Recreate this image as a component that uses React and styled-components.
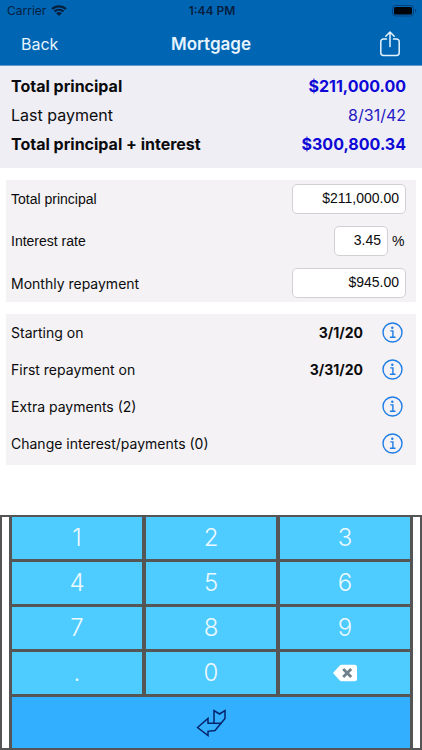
import React, { useState } from "react";
import styled, { createGlobalStyle, css } from "styled-components";

const GlobalStyle = createGlobalStyle`
  * { box-sizing: border-box; }
  body {
    margin: 0;
    background: #ffffff;
    color: #0b0b0d;
    font-family: Inter, "Liberation Sans", sans-serif;
  }
  button { font: inherit; border: 0; padding: 0; cursor: pointer; }
`;

const Screen = styled.div`
  display: flex;
  flex-direction: column;
  min-height: 100vh;
`;

const Header = styled.header`
  background: #0066b4;
  border-bottom: 1px solid #5b9bd0;
`;

const StatusBar = styled.div`
  display: grid;
  grid-template-columns: 1fr auto 1fr;
  align-items: center;
  height: 22px;
  padding: 0 5px 0 7px;
  font-size: 12px;
  line-height: 16px;
  color: #06203f;
`;

const Carrier = styled.span`
  display: flex;
  align-items: center;
  gap: 5px;
`;

const Clock = styled.span`
  font-weight: 600;
`;

const Battery = styled.span`
  display: flex;
  justify-content: flex-end;
`;

const NavBar = styled.nav`
  display: grid;
  grid-template-columns: 1fr auto 1fr;
  align-items: center;
  height: 43px;
  padding: 0 21px;
  color: #ffffff;
`;

const BackButton = styled.button`
  justify-self: start;
  background: none;
  color: #e6f4ff;
  font-size: 16px;
  line-height: 24px;
`;

const Title = styled.h1`
  margin: 0;
  font-size: 17px;
  line-height: 24px;
  font-weight: 600;
  color: #e6f4ff;
`;

const ShareButton = styled.button`
  display: flex;
  justify-self: end;
  background: none;
  color: #e6f4ff;
`;

const Summary = styled.dl`
  margin: 0;
  padding: 6px 16px 9px 11px;
  background: #efeef5;
`;

const SummaryRow = styled.div`
  display: flex;
  justify-content: space-between;
  font-size: 16px;
  line-height: 29px;
  font-weight: ${(p) => (p.$strong ? 700 : 400)};
`;

const SummaryValue = styled.dd`
  margin: 0;
  color: ${(p) => (p.$strong ? "#0d08d6" : "#2418c4")};
`;

const Main = styled.main`
  display: flex;
  flex-direction: column;
  gap: 12px;
  padding: 12px 6px;
`;

const Panel = styled.section`
  background: #f4f2f4;
`;

const Fields = styled(Panel)`
  display: flex;
  flex-direction: column;
  gap: 12px;
  padding: 4px 10px 4px 5px;
`;

const Field = styled.div`
  display: flex;
  align-items: center;
  font-size: 14px;
  height: 30px;
`;

const FieldLabel = styled.label`
  flex: 1;
  ${(p) =>
    p.$plain &&
    css`
      font-family: "Liberation Sans", Arial, sans-serif;
    `}
`;

const AmountInput = styled.input`
  width: ${(p) => (p.$short ? 54 : 114)}px;
  height: 30px;
  padding: 0 6px 2px;
  border: 1px solid #d2d0d4;
  border-radius: 5px;
  background: #ffffff;
  color: #0b0b0d;
  font: 14px "Liberation Sans", Arial, sans-serif;
  text-align: right;
`;

const Unit = styled.span`
  width: 18px;
  padding-left: 4px;
  font-family: "Liberation Sans", Arial, sans-serif;
`;

const Details = styled(Panel)`
  padding: 0 13px 3px 5px;
`;

const DetailRow = styled.div`
  display: flex;
  align-items: center;
  height: 37px;
  font-size: 14px;
`;

const DetailLabel = styled.span`
  flex: 1;
`;

const DetailDate = styled.strong`
  margin-right: 19px;
  font-weight: 700;
`;

const InfoButton = styled.button`
  display: flex;
  background: none;
  color: #1e7ce6;
`;

const Keypad = styled.section`
  margin-top: auto;
  padding: 2px;
  background: #555556;
`;

const KeypadTray = styled.div`
  padding: 0 7px;
  background: #ffffff;
`;

const Keys = styled.div`
  display: grid;
  grid-template-columns: repeat(3, 1fr);
  grid-template-rows: repeat(4, 42px) 51px;
  gap: 3px 4px;
  padding: 0 3px;
  background: #555556;
`;

const Key = styled.button`
  display: flex;
  align-items: center;
  justify-content: center;
  background: #4ecbff;
  color: #ecf9ff;
  font-family: Inter, sans-serif;
  font-size: 24px;
  font-weight: 300;
  line-height: 30px;
`;

const EnterKey = styled(Key)`
  grid-column: 1 / -1;
  background: #33afff;
`;

const WifiIcon = () => (
  <svg width="16" height="12" viewBox="0 0 16 12" fill="currentColor" aria-hidden="true">
    <path d="M8 0.3C5 .3 2.3 1.4.3 3.3L1.8 4.8C3.4 3.3 5.6 2.4 8 2.4s4.6.9 6.2 2.4l1.5-1.5C13.7 1.4 11 .3 8 .3z" />
    <path d="M8 3.7c-2.1 0-3.9.8-5.3 2.1l1.5 1.5C5.2 6.4 6.5 5.8 8 5.8s2.800.6 3.800 1.500l1.500-1.500C11.900 4.500 10.100 3.700 8 3.700z" />
    <path d="M8 7.100c-1.100 0-2.100.4-2.900 1.100L8 11.100l2.900-2.900C10.100 7.500 9.100 7.100 8 7.100z" />
  </svg>
);

const BatteryIcon = () => (
  <svg width="25" height="12" viewBox="0 0 25 12" aria-hidden="true">
    <rect x="0.5" y="0.5" width="21" height="10.5" rx="3" fill="none" stroke="#06407c" />
    <rect x="2" y="2" width="18" height="7.5" rx="1.6" fill="#000308" />
    <path d="M23 4c1 .3 1.400 1 1.400 1.800S24 7.300 23 7.600z" fill="#06407c" />
  </svg>
);

const ShareIcon = () => (
  <svg width="22" height="26" viewBox="0 0 22 26" fill="none" stroke="currentColor" strokeWidth="1.5" strokeLinecap="round" strokeLinejoin="round" aria-hidden="true">
    <path d="M7.500 8H4.500a2.700 2.700 0 0 0-2.700 2.700v11a2.700 2.700 0 0 0 2.700 2.700h13a2.700 2.700 0 0 0 2.700-2.700v-11A2.700 2.700 0 0 0 17.500 8h-3" />
    <path d="M11 15.500V1.200M6.800 5.200 11 1l4.200 4.200" />
  </svg>
);

const InfoIcon = () => (
  <svg width="21" height="21" viewBox="0 0 21 21" fill="none" stroke="currentColor" strokeWidth="1.4" aria-hidden="true">
    <circle cx="10.5" cy="10.5" r="9.5" />
    <circle cx="10.3" cy="5.7" r="1.2" fill="currentColor" stroke="none" />
    <path d="M8.300 8.900h2.600v6.200M7.900 15.200h5.600" />
  </svg>
);

const BackspaceIcon = () => (
  <svg width="26" height="18" viewBox="0 0 26 18" aria-hidden="true">
    <path d="M1 9 7.300 2Q8.300.8 9.800.8H22.500Q25 .8 25 3.300V14.700Q25 17.200 22.500 17.200H9.800Q8.300 17.200 7.300 16z" fill="#fff" />
    <path d="m11.200 5 8 8m0-8-8 8" fill="none" stroke="#70808c" strokeWidth="2.8" />
  </svg>
);

const EnterIcon = () => (
  <svg width="30" height="28" viewBox="0 0 30 28" fill="none" stroke="#06246b" strokeWidth="1.5" aria-hidden="true">
    <path d="M1.500 18.500 12 9.500V14.300H18V1.500L23.500 5 29 1.500V9.500L19 21.500 12 22.300V26.500Z" />
    <path d="M18 14.300H25.500" />
  </svg>
);

const summary = [
  { label: "Total principal", value: "$211,000.00", strong: true },
  { label: "Last payment", value: "8/31/42", strong: false },
  { label: "Total principal + interest", value: "$300,800.34", strong: true },
];

const details = [
  { label: "Starting on", date: "3/1/20" },
  { label: "First repayment on", date: "3/31/20" },
  { label: "Extra payments (2)" },
  { label: "Change interest/payments (0)" },
];

const keys = ["1", "2", "3", "4", "5", "6", "7", "8", "9", ".", "0"];

export default function App() {
  const [values, setValues] = useState({
    principal: "$211,000.00",
    rate: "3.45",
    repayment: "$945.00",
  });
  const bind = (id) => ({
    id,
    value: values[id],
    onChange: (e) => setValues({ ...values, [id]: e.target.value }),
  });

  return (
    <Screen>
      <GlobalStyle />
      <Header>
        <StatusBar>
          <Carrier>Carrier <WifiIcon /></Carrier>
          <Clock>1:44 PM</Clock>
          <Battery><BatteryIcon /></Battery>
        </StatusBar>
        <NavBar>
          <BackButton type="button">Back</BackButton>
          <Title>Mortgage</Title>
          <ShareButton type="button" aria-label="Share"><ShareIcon /></ShareButton>
        </NavBar>
      </Header>

      <Summary>
        {summary.map((row) => (
          <SummaryRow key={row.label} $strong={row.strong}>
            <dt>{row.label}</dt>
            <SummaryValue $strong={row.strong}>{row.value}</SummaryValue>
          </SummaryRow>
        ))}
      </Summary>

      <Main>
        <Fields>
          <Field>
            <FieldLabel htmlFor="principal" $plain>Total principal</FieldLabel>
            <AmountInput {...bind("principal")} />
          </Field>
          <Field>
            <FieldLabel htmlFor="rate" $plain>Interest rate</FieldLabel>
            <AmountInput $short {...bind("rate")} />
            <Unit>%</Unit>
          </Field>
          <Field>
            <FieldLabel htmlFor="repayment">Monthly repayment</FieldLabel>
            <AmountInput {...bind("repayment")} />
          </Field>
        </Fields>

        <Details>
          {details.map((row) => (
            <DetailRow key={row.label}>
              <DetailLabel>{row.label}</DetailLabel>
              {row.date && <DetailDate>{row.date}</DetailDate>}
              <InfoButton type="button" aria-label={`About ${row.label}`}><InfoIcon /></InfoButton>
            </DetailRow>
          ))}
        </Details>
      </Main>

      <Keypad>
        <KeypadTray>
          <Keys>
            {keys.map((k) => (
              <Key key={k} type="button">{k}</Key>
            ))}
            <Key type="button" aria-label="Delete"><BackspaceIcon /></Key>
            <EnterKey type="button" aria-label="Enter"><EnterIcon /></EnterKey>
          </Keys>
        </KeypadTray>
      </Keypad>
    </Screen>
  );
}
